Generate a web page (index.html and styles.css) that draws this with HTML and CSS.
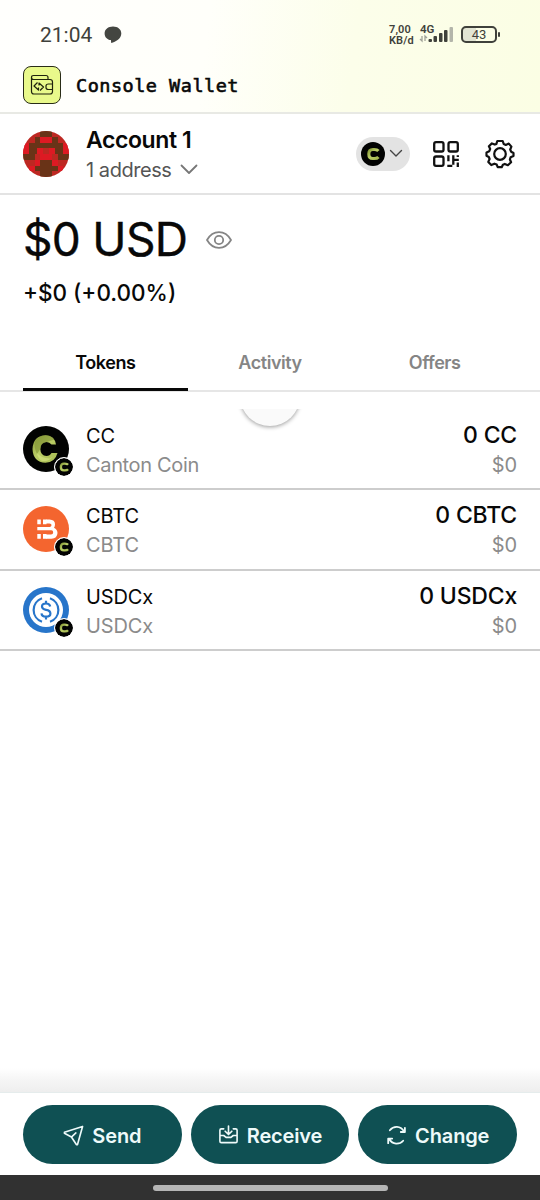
FILE: index.html
```html
<!DOCTYPE html>
<html lang="en">
<head>
<meta charset="utf-8">
<title>Console Wallet</title>
<link rel="stylesheet" href="styles.css">
</head>
<body>
<svg width="0" height="0" class="defs">
  <defs>
    <linearGradient id="lime" x1="0" y1="0" x2="1" y2="1"><stop offset="0" stop-color="#879a38"/><stop offset=".45" stop-color="#bacd65"/><stop offset="1" stop-color="#a5b951"/></linearGradient>
    <symbol id="canton" viewBox="0 0 46 46">
      <circle cx="23" cy="23" r="23" fill="#020302"/>
      <path d="M33 18.500H28.500Q26.500 15.800 23 16Q17.500 16.500 17.300 23Q17.500 29.500 23.500 30Q26.800 30 28.500 27H34.500Q32 36.500 22.500 36.800Q10 36 9.500 23Q10 10 22.500 9.200Q31.500 9.500 33 18.500Z" fill="url(#lime)"/>
      <path d="M12 15Q16 8.500 24 9.300Q29 10 31.500 13.500L24 16Q17.500 16.500 17.300 23L14 28Q10.500 21 12 15Z" fill="#849738" opacity=".65"/>
      <path d="M14 27Q18 32 27 32.500L30 30.500Q25 36.500 18 34.500Q14.500 31.500 14 27Z" fill="#d3e27f" opacity=".7"/>
    </symbol>
    <symbol id="canton-small" viewBox="0 0 20 20">
      <circle cx="10" cy="10" r="10" fill="#020302"/>
      <path d="M14.500 7.500Q13.500 6.200 11 6.200H9.800Q6.500 6.200 6.500 10T9.800 13.800H11Q13.500 13.800 14.500 12.500" fill="none" stroke="url(#lime)" stroke-width="2.600"/>
    </symbol>
  </defs>
</svg>
<div class="phone">
  <header class="top">
    <div class="status">
      <span class="clock">21:04</span>
      <svg class="bubble" width="18" height="18" viewBox="0 0 18 18"><path d="M9 .5C4.200.5.6 3.300.6 7.400c0 3.800 2.700 6.200 6.300 6.700l.3 2.900c4.700-1.300 10.100-4.600 10.100-9.600C17.300 3.300 13.800.5 9 .5Z" fill="#444641"/></svg>
      <span class="speed">7,00<br>KB/d</span>
      <div class="signal">
        <span class="net">4G</span>
        <svg width="36" height="20" viewBox="0 0 36 20"><g fill="#3f413b"><rect x="9.500" y="14" width="3.500" height="3" rx="1"/><rect x="14.500" y="11" width="3.500" height="6" rx="1"/><rect x="20" y="8" width="3.500" height="9" rx="1"/><rect x="25" y="5" width="3.500" height="12" rx="1"/></g><rect x="30.500" y="2" width="3.500" height="15" rx="1" fill="#b3b5aa"/><path d="M3 11v5l-2-2M6 16v-5l2 2" fill="none" stroke="#a0a298" stroke-width="1.300"/></svg>
      </div>
      <div class="battery"><span>43</span></div>
    </div>
    <div class="brand">
      <div class="logo"><svg width="35" height="35" viewBox="0 0 35 35" fill="none" stroke="#20230e" stroke-width="1.200" stroke-linejoin="round"><path d="M7.500 10.500V24.500q0 2.500 2.500 2.500H26q2.500 0 2.500-2.500v-9.500q0-2.500-2.500-2.500H9.500q-2 0-2-2t2-2H22q2 0 2 2v2M29 17h-4.500q-2.500 0-2.500 2v1.500q0 2 2.500 2H29"/><path d="M13.500 15.500l-3.500 3.500 4.500 4v-2.500M15 18.500V16l4.500 4-3.500 3.500"/></svg></div>
      <span class="brand-name">Console Wallet</span>
    </div>
  </header>

  <section class="account">
    <svg class="avatar" viewBox="0 0 8 8" shape-rendering="crispEdges"><rect width="8" height="8" fill="#bd2822"/><path fill="#693317" d="M3 0h2v1h-2zM2 1h1v1h-1zM5 1h1v1h-1zM2 2h4v1h-4zM1 2h1v3h-1zM6 2h1v3h-1zM2 2h.5v2h-.5zM5.500 2h.5v2h-.5zM0 4h1v1h-1zM7 4h1v1h-1zM3 5h2v1h-2zM2 6h4v1h-4zM3 7h2v1h-2z"/><path fill="#dd1a23" d="M3 1h2v1h-2zM0 2h1v2h-1zM7 2h1v2h-1zM2.500 3h1v1h-1zM4.500 3h1v1h-1zM3 4h2v1h-2zM2 5h1v1h-1zM5 5h1v1h-1zM1 6h1v1h-1zM6 6h1v1h-1z"/></svg>
    <div class="who">
      <div class="acct-name">Account 1</div>
      <div class="acct-addr"><span>1 address</span><svg width="18" height="11" viewBox="0 0 18 11"><path d="M1.500 1.500 9 9l7.500-7.500" fill="none" stroke="#777" stroke-width="1.800" stroke-linecap="round" stroke-linejoin="round"/></svg></div>
    </div>
    <div class="network"><svg width="24" height="24"><use href="#canton-small"/></svg><svg width="14" height="9" viewBox="0 0 14 9"><path d="M1.500 1.500 7 7l5.500-5.500" fill="none" stroke="#444" stroke-width="1.400" stroke-linecap="round" stroke-linejoin="round"/></svg></div>
    <svg class="qr" width="28" height="28" viewBox="0 0 28 28" fill="none" stroke="#111" stroke-width="2.300"><rect x="2.200" y="2.200" width="9.300" height="9.300" rx="1.800"/><rect x="16.500" y="2.200" width="9.300" height="9.300" rx="1.800"/><rect x="2.200" y="16.500" width="9.300" height="9.300" rx="1.800"/><path d="M16.400 15.300v6M21.300 15.300v9.500M15.300 25.800h5M21.300 19.800h5.500M25.800 15.300v1.800M25.800 22.500v4.400"/></svg>
    <svg class="gear" width="30" height="30" viewBox="0 0 30 30" fill="none" stroke="#111" stroke-width="2.200" stroke-linejoin="round"><path d="M12.300 2h5.400l1 3 2.100.9L23.800 4.600l2.600 3-1.200 2.900.9 2.200 2.400 1.300v3l-2.900 1.200-.7 2.300 1.200 2.800-3.200 2.900-3.100-1.300-1.900.8-1.200 2.500h-4l-1-2.600-2.300-.9-3.100 1.400-3-3.200 1.300-2.900-.8-2L1.500 16.700v-3.300l2.800-1.200.9-2.300-1.300-2.700 3-2.800 2.900 1.200 1.600-.7Z"/><circle cx="15" cy="15" r="5.800"/></svg>
  </section>

  <section class="balance">
    <div class="total"><span class="amount">$0 USD</span><svg width="26" height="18" viewBox="0 0 26 18" fill="none" stroke="#858585" stroke-width="1.800"><path d="M1 9Q5.500 1.200 13 1.200T25 9Q20.500 16.800 13 16.800T1 9Z" stroke-linejoin="round"/><circle cx="13" cy="9" r="4.200"/></svg></div>
    <div class="delta"><span>+$0 (+0.00%)</span></div>
  </section>

  <nav class="tabs">
    <div class="tab active"><span>Tokens</span></div>
    <div class="tab"><span>Activity</span></div>
    <div class="tab"><span>Offers</span></div>
  </nav>

  <main class="tokens">
    <div class="pull"><div class="spinner"></div></div>
    <div class="row">
      <div class="coin"><svg width="46" height="46"><use href="#canton"/></svg><svg class="badge" width="18" height="18"><use href="#canton-small"/></svg></div>
      <div class="names"><div class="sym">CC</div><div class="full canton-name">Canton Coin</div></div>
      <div class="values"><div class="qty">0 CC</div><div class="usd">$0</div></div>
    </div>
    <div class="row">
      <div class="coin"><svg width="46" height="46" viewBox="0 0 46 46"><circle cx="23" cy="23" r="23" fill="#f4652f"/><g fill="#fff"><path d="M14.300 13.500h3.500v4.700h-3.500zM20 13.500h3.500v4.700H20zM14.300 28h3.500v4.700h-3.500zM20 28h3.500v4.700H20z"/><path d="M14.300 21h13v3.300h-13zM23 13.500h3.500q5.500.3 5.500 4.700 0 2-1 3.500Q34.500 23.500 34.500 27q-.3 5.700-6 5.700H23V28.500h5q2.200 0 2.200-2.200T28 24.300h-1V21q1.500-.5 1.500-2t-2-1.500H23Z"/></g></svg><svg class="badge" width="18" height="18"><use href="#canton-small"/></svg></div>
      <div class="names"><div class="sym">CBTC</div><div class="full">CBTC</div></div>
      <div class="values"><div class="qty">0 CBTC</div><div class="usd">$0</div></div>
    </div>
    <div class="row">
      <div class="coin"><svg width="46" height="46" viewBox="0 0 46 46"><circle cx="23" cy="23" r="23" fill="#2775ca"/><circle cx="23" cy="23" r="17" fill="#fff"/><path d="M19 11.200a12.500 12.500 0 0 0 0 23.600M27 11.200a12.500 12.500 0 0 1 0 23.600" fill="none" stroke="#2775ca" stroke-width="2.200"/><path d="M27.200 19.500q-.5-3-4.200-3-4 0-4 3 0 2.600 4 3.300 4.400.7 4.400 3.700 0 3.200-4.400 3.200-4.200 0-4.500-3.300M23 13.800v2.700M23 29.500v3" fill="none" stroke="#2775ca" stroke-width="2.200"/></svg><svg class="badge" width="18" height="18"><use href="#canton-small"/></svg></div>
      <div class="names"><div class="sym">USDCx</div><div class="full">USDCx</div></div>
      <div class="values"><div class="qty">0 USDCx</div><div class="usd">$0</div></div>
    </div>
  </main>

  <div class="fade"></div>
  <footer class="actions">
    <div class="btn"><svg width="22" height="22" viewBox="0 0 22 22" fill="none" stroke="#eefafa" stroke-width="1.700" stroke-linejoin="round" stroke-linecap="round"><path d="M20.500 1.500 1.500 7.500v1.200L8.800 12.600 14 20.500h1.200ZM8.800 12.600l4.700-4.300"/></svg><span>Send</span></div>
    <div class="btn"><svg width="22" height="22" viewBox="0 0 22 22" fill="none" stroke="#eefafa" stroke-width="1.700" stroke-linejoin="round" stroke-linecap="round"><path d="M6 4H3.500Q2 4 2 5.500v11.500Q2 18.500 3.500 18.500h15q1.500 0 1.500-1.500v-11.500Q20 4 18.500 4H16M2 11h4l2.500 2h5l2.500-2H20M11 1v8.500M7.500 6.500 11 10l3.500-3.500"/></svg><span>Receive</span></div>
    <div class="btn"><svg width="22" height="22" viewBox="0 0 22 22" fill="none" stroke="#eefafa" stroke-width="1.900" stroke-linejoin="round" stroke-linecap="round"><path d="M4 5.500Q7 1.800 11.500 2q4.500.3 7.300 4.500M19.800 3v4.300h-4.300M18 16.500q-3 3.300-7.500 3-4.500-.3-7-4.500M2.300 19v-4.800h4.200"/></svg><span>Change</span></div>
  </footer>
  <div class="gesture"><div class="handle"></div></div>
</div>
</body>
</html>
```
FILE: styles.css
```css
* { box-sizing: border-box; }
body { margin: 0; background: #fff; font-family: Inter, sans-serif; color: #080808; }
.defs { position: absolute; }
.phone { width: 540px; height: 1200px; display: flex; flex-direction: column; overflow: hidden; white-space: nowrap; }

.top { height: 114px; border-bottom: 2px solid #e8e9e4; background: linear-gradient(97deg, #fffffd 0%, #fffffa 38%, #fcfeea 65%, #fbfee4 100%); }
.status { height: 62px; padding: 7px 40px 0; display: flex; align-items: center; color: #3f413b; font-family: Roboto, sans-serif; }
.clock { font-size: 21px; width: 52px; }
.bubble { margin-left: 12px; }
.speed { margin-left: 267px; font-size: 11px; line-height: 11px; font-weight: 600; width: 26px; letter-spacing: .1px; }
.signal { position: relative; margin-left: 4px; width: 36px; height: 20px; }
.net { position: absolute; left: 1px; top: -2px; font-size: 11.5px; line-height: 12px; font-weight: 600; }
.battery { margin-left: 6px; width: 36px; height: 17px; border: 2px solid #3f413b; border-radius: 5px; font-size: 13px; line-height: 14px; text-align: center; position: relative; background: linear-gradient(90deg, #e2e5d4 40%, transparent 40%); }
.battery::after { content: ""; position: absolute; right: -5px; top: 4px; width: 2px; height: 5px; background: #3f413b; border-radius: 1px; }
.brand { display: flex; align-items: center; height: 46px; padding-left: 23px; gap: 15px; }
.logo { width: 38px; height: 38px; border: 1.500px solid #292c17; border-radius: 8px; background: #e9f98b; display: flex; }
.brand-name { font-family: "DejaVu Sans Mono", monospace; font-size: 18.5px; letter-spacing: .5px; -webkit-text-stroke: .6px #080808; }

.account { height: 81px; border-bottom: 2px solid #e3e3e3; padding: 0 25px 0 23px; display: flex; align-items: center; }
.avatar { width: 46px; height: 46px; border-radius: 50%; }
.who { margin-left: 17px; width: 270px; padding-top: 2px; }
.acct-name { font-size: 23px; font-weight: 600; line-height: 30px; letter-spacing: -.4px; }
.acct-addr { display: flex; align-items: center; gap: 9px; font-size: 20px; line-height: 30px; color: #555; letter-spacing: -.45px; }
.network { width: 54px; height: 34px; border-radius: 17px; background: #e3e3e3; display: flex; align-items: center; padding-left: 5px; gap: 4px; }
.qr { margin-left: 22px; }
.gear { margin-left: 25px; flex: none; }

.balance { height: 139px; padding: 15px 23px 0; }
.total { display: flex; align-items: center; height: 60px; gap: 19px; }
.amount { font-size: 46px; letter-spacing: -.7px; font-weight: 400; -webkit-text-stroke: .4px #080808; line-height: 56px; padding-bottom: 2px; }
.delta { font-size: 22.5px; line-height: 28px; margin-top: 9px; font-weight: 500; }

.tabs { height: 58px; border-bottom: 2px solid #e6e6e6; display: flex; padding: 0 23px; }
.tab { flex: 1; height: 57px; text-align: center; font-size: 18px; font-weight: 600; line-height: 58px; color: #858585; letter-spacing: -.45px; }
.tab.active { color: #080808; border-bottom: 3px solid #080808; }

.tokens { padding-top: 17.500px; position: relative; flex: 1; }
.pull { position: absolute; left: 230px; top: 17px; width: 80px; height: 30px; overflow: hidden; }
.spinner { width: 60px; height: 60px; border-radius: 50%; margin: -43px auto 0; background: #fafafa; box-shadow: 0 1px 4px rgba(0,0,0,.4); }
.row { height: 80.500px; border-bottom: 2px solid #cdcdcd; display: flex; align-items: center; padding: 0 23px; }
.coin { position: relative; width: 46px; height: 46px; }
.coin svg { display: block; }
.coin .badge { position: absolute; left: 31px; top: 31px; border: 1.500px solid #fff; border-radius: 50%; box-sizing: content-box; width: 18px; height: 18px; background: #fff; }
.names { margin-left: 17px; padding-top: 4px; }
.sym, .full, .usd { font-size: 20px; line-height: 29px; letter-spacing: -.15px; }
.canton-name { letter-spacing: -.35px; }
.full, .usd { color: #8b8b8b; }
.values { margin-left: auto; text-align: right; padding-top: 4px; }
.qty { font-size: 23px; font-weight: 550; line-height: 29px; letter-spacing: -.2px; margin-top: -1px; margin-bottom: 1px; }

.fade { height: 24px; background: linear-gradient(#fff, #f5f5f5 50%, #eee); }
.actions { height: 83px; border-top: 1px solid #e5ecec; padding: 12px 23px 0; display: flex; gap: 9px; }
.btn { flex: 1; height: 59px; border-radius: 30px; background: #0f5053; color: #eefafa; display: flex; align-items: center; justify-content: center; gap: 8px; font-size: 20px; font-weight: 600; letter-spacing: -.15px; padding-top: 2px; }
.btn svg { width: 21px; height: 21px; }
.gesture { height: 25px; background: #313131; display: flex; justify-content: center; align-items: center; }
.handle { width: 235px; height: 6px; border-radius: 3px; background: #b5b5b5; }
```
